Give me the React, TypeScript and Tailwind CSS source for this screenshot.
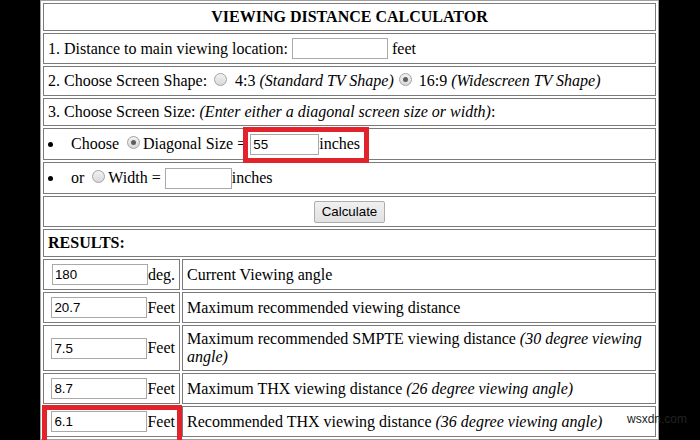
import React from "react";

const serif = "font-['Liberation_Serif','Times_New_Roman',serif]";
const sans = "font-['Liberation_Sans',Arial,sans-serif]";
const cell = "border border-[#7b7b7b] bg-white flex items-center px-[4px]";

function Radio({ checked }: { checked?: boolean }) {
  return (
    <span className="inline-flex shrink-0 w-[13px] h-[13px] rounded-full border border-[#a3a3a3] bg-linear-to-b from-[#f2f2f2] to-[#d9d9d9] items-center justify-center mb-[3px]">
      {checked && <span className="block w-[5px] h-[5px] rounded-full bg-[#5f5f5f]" />}
    </span>
  );
}

function Field({ value, w, className = "" }: { value?: string; w: string; className?: string }) {
  return (
    <input
      readOnly
      value={value ?? ""}
      className={`${sans} ${w} h-[21px] shrink-0 border border-[#a9a9a9] bg-white px-[2px] text-[13.33px] text-black outline-none ${className}`}
    />
  );
}

function Bullet() {
  return <span className="block shrink-0 w-[5px] h-[5px] rounded-full bg-black" />;
}

function ResultRow({ h, value, unit, children }: { h: string; value: string; unit: string; children: React.ReactNode }) {
  return (
    <div className={`flex gap-[2px] ${h}`}>
      <div className={`${cell} w-[137px] justify-end`}>
        <Field value={value} w="w-[96px]" />
        <span>{unit}</span>
      </div>
      <div className={`${cell} flex-1`}>
        <div>{children}</div>
      </div>
    </div>
  );
}

export default function App() {
  return (
    <div className={`relative w-[700px] h-[440px] overflow-hidden bg-black text-black text-[16px] leading-[18px] ${serif}`}>
      <div className="ml-[40px] w-[619px] border border-[#a0a0a0] bg-white p-[2px] flex flex-col gap-[2px]">
        <div className={`${cell} h-[28px] justify-center font-bold`}>VIEWING DISTANCE CALCULATOR</div>

        <div className={`${cell} h-[31px]`}>
          <span>1. Distance to main viewing location:</span>
          <Field w="w-[96px]" className="ml-[4px]" />
          <span className="ml-[4px]">feet</span>
        </div>

        <div className={`${cell} h-[30px]`}>
          <span>2. Choose Screen Shape:</span>
          <span className="ml-[7px] flex"><Radio /></span>
          <span className="ml-[8px]">4:3</span>
          <span className="ml-[4px] italic">(Standard TV Shape)</span>
          <span className="ml-[5px] flex"><Radio checked /></span>
          <span className="ml-[7px]">16:9</span>
          <span className="ml-[4px] italic">(Widescreen TV Shape)</span>
        </div>

        <div className={`${cell} h-[28px]`}>
          <div>
            3. Choose Screen Size: <i>(Enter either a diagonal screen size or width)</i>:
          </div>
        </div>

        <div className={`${cell} h-[32px]`}>
          <Bullet />
          <span className="ml-[18px]">Choose</span>
          <span className="ml-[8px] flex"><Radio checked /></span>
          <span className="ml-[3px]">Diagonal Size =</span>
          <Field value="55" w="w-[69px]" className="ml-[4px]" />
          <span>inches</span>
        </div>

        <div className={`${cell} h-[32px]`}>
          <Bullet />
          <span className="ml-[18px]">or</span>
          <span className="ml-[8px] flex"><Radio /></span>
          <span className="ml-[3px]">Width =</span>
          <Field w="w-[67px]" className="ml-[4px]" />
          <span>inches</span>
        </div>

        <div className={`${cell} h-[31px] justify-center`}>
          <button
            className={`${sans} h-[22px] px-[7px] border border-[#adadad] rounded-[2px] bg-linear-to-b from-[#f0f0f0] to-[#e1e1e1] text-[13.33px] text-black`}
          >
            Calculate
          </button>
        </div>

        <div className={`${cell} h-[28px] font-bold`}>RESULTS:</div>

        <ResultRow h="h-[31px]" value="180" unit="deg.">Current Viewing angle</ResultRow>
        <ResultRow h="h-[31px]" value="20.7" unit="Feet">Maximum recommended viewing distance</ResultRow>
        <ResultRow h="h-[46px]" value="7.5" unit="Feet">
          Maximum recommended SMPTE viewing distance <i>(30 degree viewing angle)</i>
        </ResultRow>
        <ResultRow h="h-[31px]" value="8.7" unit="Feet">
          Maximum THX viewing distance <i>(26 degree viewing angle)</i>
        </ResultRow>
        <ResultRow h="h-[31px]" value="6.1" unit="Feet">
          Recommended THX viewing distance <i>(36 degree viewing angle)</i>
        </ResultRow>
      </div>

      {/* annotation highlight boxes */}
      <div className="absolute left-[243px] top-[127px] w-[126px] h-[36px] border-[5px] border-[#e3232b]" />
      <div className="absolute left-[42px] top-[405px] w-[140px] h-[45px] border-[5px] border-[#e3232b]" />

      {/* watermark */}
      <div className={`absolute left-[627px] top-[412px] text-[12px] leading-[14px] text-[#222] ${sans}`}>wsxdn.com</div>
    </div>
  );
}
